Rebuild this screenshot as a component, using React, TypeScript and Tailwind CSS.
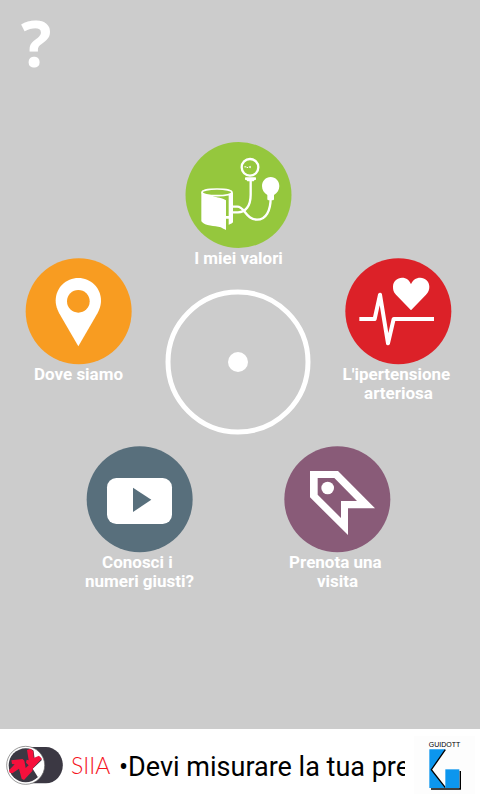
import type { ReactNode } from "react";

type MenuItemProps = {
  label: string;
  viewBox: string;
  children: ReactNode;
};

function MenuItem({ label, viewBox, children }: MenuItemProps) {
  return (
    <button type="button" className="flex w-[113px] flex-col items-center text-white">
      <svg viewBox={viewBox} className="size-[107px]" aria-hidden="true">
        {children}
      </svg>
      <span className="text-center text-[17px] leading-[19px] font-bold whitespace-pre">{label}</span>
    </button>
  );
}

function ValuesItem() {
  return (
    <MenuItem label="I miei valori" viewBox="27 30 321 321">
      <circle cx="187.5" cy="189" r="159" fill="#95c73d" />
      <g fill="none" stroke="#fff">
        <ellipse cx="123" cy="181" rx="45" ry="10" strokeWidth="5" />
        <circle cx="222" cy="106" r="25" strokeWidth="7" />
        <path d="M224 142V188C224 222 208 241 186 241H168" strokeWidth="7" />
        <path d="M168 224H184C206 224 210 263 243 263C270 263 284 236 284 198" strokeWidth="7" />
      </g>
      <g fill="#fff">
        <path d="M76 181C84 189 97 190 108 191C125 198 138 196 150 205V252H158V190L171 181V271C167 275 163 277 158 278V260H150V294C144 291 140 290 134 286C116 281 88 284 76 268Z" />
        <rect x="207" y="136" width="33" height="8" rx="2" />
        <rect x="212" y="142" width="23" height="6" rx="3" />
        <path d="M284 135C299 135 310 147 310 162C310 174 304 183 294 189V201Q294 205 290 205H278Q274 205 274 201V189C264 183 258 174 258 162C258 147 269 135 284 135Z" />
        <path d="M217 105L224 101V109Z" />
        <rect x="205" y="103" width="6" height="3" />
        <rect x="212" y="105" width="4" height="3" />
      </g>
    </MenuItem>
  );
}

function PlaceItem() {
  return (
    <MenuItem label="Dove siamo" viewBox="27 24 321 321">
      <circle cx="188" cy="184" r="159" fill="#f89c21" />
      <path
        d="M187 84C224 84 255 113 255 152C255 170 247 185 238 201L187 289L136 201C127 185 119 170 119 152C119 113 150 84 187 84Z"
        fill="#fff"
      />
      <circle cx="187" cy="154" r="34" fill="#f89c21" />
    </MenuItem>
  );
}

function HypertensionItem() {
  return (
    <MenuItem label={"L'ipertensione \narteriosa"} viewBox="33 24 321 321">
      <circle cx="193" cy="184" r="159" fill="#dc2128" />
      <path
        d="M76 207H122L138 134L162 280L179 207H300"
        fill="none"
        stroke="#fff"
        strokeWidth="12"
        strokeLinejoin="round"
      />
      <path
        d="M231 181L186 134C178 126 177 118 177 110C177 94 190 83 204 83C217 83 227 91 231 103C235 91 246 83 259 83C273 83 286 94 286 110C286 118 284 126 276 134Z"
        fill="#fff"
      />
    </MenuItem>
  );
}

function VideoItem() {
  return (
    <MenuItem label={"Conosci i \nnumeri giusti?"} viewBox="30 18 321 321">
      <circle cx="191" cy="178" r="159" fill="#586f7c" />
      <rect x="93" y="114" width="195" height="138" rx="28" fill="#fff" />
      <path d="M171 143L226 179L171 216Z" fill="#586f7c" />
    </MenuItem>
  );
}

function BookingItem() {
  return (
    <MenuItem label={"Prenota una \nvisita"} viewBox="30 18 321 321">
      <circle cx="190" cy="178" r="159" fill="#895b78" />
      <path
        fillRule="evenodd"
        fill="#fff"
        d="M108 93H192L303 205H222V285L108 172ZM131 114V164L201 234V183H249L181 114Z"
      />
      <circle cx="161" cy="144" r="19" fill="#fff" />
    </MenuItem>
  );
}

function SiiaLogo() {
  return (
    <svg viewBox="18 12 174 126" className="h-[42px] w-[58px] shrink-0" aria-hidden="true">
      <path d="M76 21H138A50 54 0 0 1 138 130H76Z" fill="#3b3843" />
      <circle cx="77" cy="76" r="57" fill="#fff" stroke="#666" strokeWidth="2" />
      <circle cx="77" cy="76" r="51" fill="#3b3843" />
      <path d="M98 86L128 58A53 53 0 0 1 114 112Z" fill="#fff" />
      <path d="M100 28A53 53 0 0 1 124 52L104 56Z" fill="#fff" />
      <path d="M27 91L44 73L36 72L34 61L68 57L73 62L77 84L86 76L78 68L80 59L86 61L81 30L92 26L100 34L101 54L117 47L125 56L99 84L97 93L72 120L65 116L57 86L37 100L29 98Z" fill="#f6103c" />
    </svg>
  );
}

function GuidottiLogo() {
  return (
    <div className="flex w-[61px] shrink-0 flex-col items-center bg-[#fdfdfd] py-1">
      <span className="font-['Liberation_Sans',Arial,sans-serif] text-[7px] leading-[9px] text-black">GUIDOTT</span>
      <svg viewBox="0 0 96 123" className="h-[41px] w-8" aria-hidden="true">
        <path d="M6 120H94V66" fill="none" stroke="#000" strokeWidth="5" />
        <path d="M1 1H49L7 62L49 117H1Z" fill="#0c96ee" />
        <path d="M49 2L7 62L49 116" fill="none" stroke="#000" strokeWidth="4" />
        <rect x="49" y="61" width="42" height="56" fill="#0c96ee" />
      </svg>
    </div>
  );
}

export default function App() {
  return (
    <div className="flex min-h-screen flex-col bg-[#cccccc] font-[Roboto,sans-serif]">
      <header className="h-[142px] px-[21px]">
        <button
          type="button"
          aria-label="Aiuto"
          className="font-['Open_Sans',sans-serif] text-[64px] leading-[86px] font-bold text-white"
        >
          ?
        </button>
      </header>

      <main className="flex flex-1 flex-col pr-[25px] pb-8 pl-[22px]">
        <div className="grid grid-cols-[113px_1fr_113px] items-start">
          <div className="mt-[116px]">
            <PlaceItem />
          </div>
          <div className="flex flex-col items-center">
            <ValuesItem />
            <svg viewBox="0 0 145 145" className="mt-[22px] size-[145px] overflow-visible" aria-hidden="true">
              <circle cx="72" cy="72" r="70" fill="none" stroke="#fff" strokeWidth="5" />
              <circle cx="72" cy="72" r="10" fill="#fff" />
            </svg>
          </div>
          <div className="mt-[116px]">
            <HypertensionItem />
          </div>
        </div>
        <div className="mt-[11px] flex justify-center gap-[85px]">
          <VideoItem />
          <BookingItem />
        </div>
      </main>

      <footer className="flex h-[71px] items-center bg-white pr-[5px] pl-[6px]">
        <SiiaLogo />
        <span className="ml-[7px] w-10 shrink-0 font-[Lato,sans-serif] text-[23px] leading-9 font-light text-[#f5141e]">
          SIIA
        </span>
        <p className="mr-[9px] ml-[8px] min-w-0 flex-1 overflow-hidden pt-1 text-[27px] leading-9 whitespace-nowrap text-black">
          •Devi misurare la tua pre
        </p>
        <GuidottiLogo />
      </footer>
    </div>
  );
}
